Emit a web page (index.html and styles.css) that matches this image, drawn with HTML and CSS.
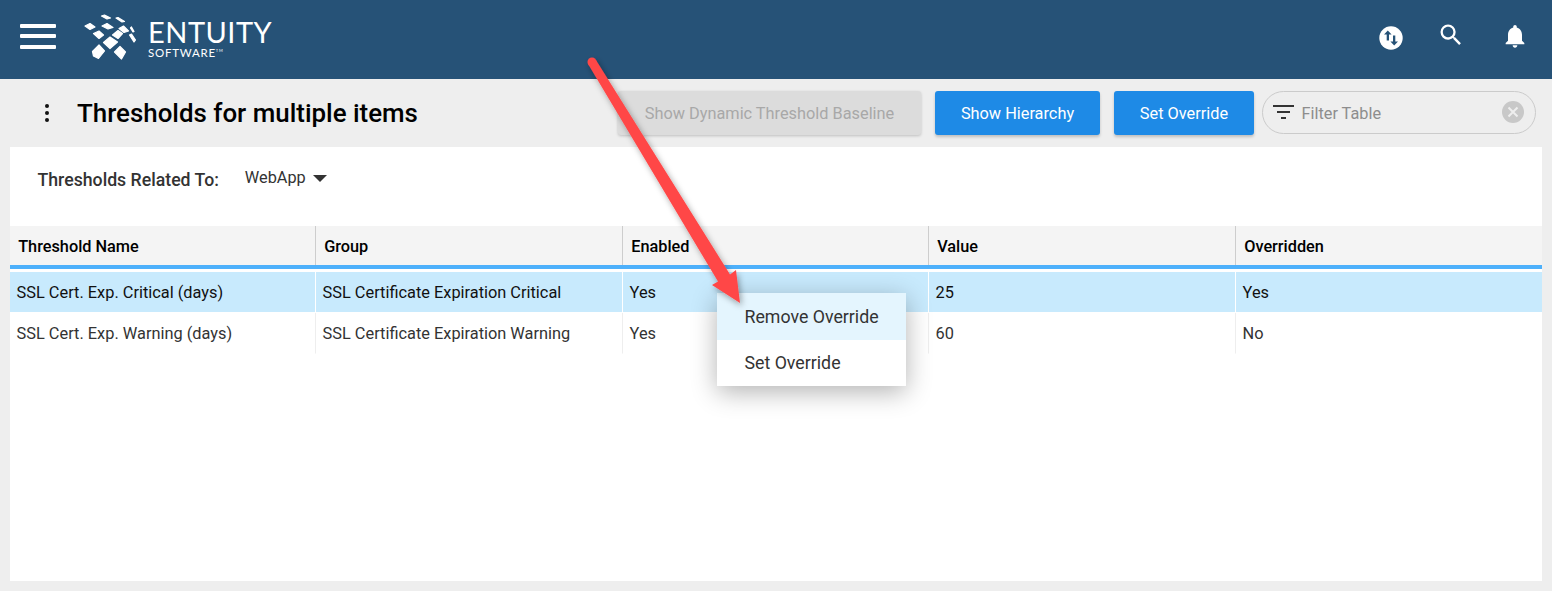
FILE: index.html
```html
<!DOCTYPE html>
<html lang="en">
<head>
<meta charset="utf-8">
<title>Thresholds for multiple items</title>
<link rel="stylesheet" href="styles.css">
</head>
<body>
<header class="topbar">
  <div class="burger"><span></span><span></span><span></span></div>
  <svg class="logo-mark" viewBox="0 0 54 48" width="54" height="48" fill="#fff" stroke="#fff" stroke-width="1.200" stroke-linejoin="round">
    <polygon points="18.500,3 21.500,2 27.500,5 24,6"/>
    <polygon points="33,5 35,4.500 41.500,8.500 39,9"/>
    <polygon points="2,13 7,10.500 12,14 7,16.500"/>
    <polygon points="19,13 24,10.500 30,14.500 25,16"/>
    <polygon points="36,15.500 40.500,13 45.500,18 41,19.500"/>
    <polygon points="47.500,15 48.500,14 51,18.500 50,19"/>
    <polygon points="10.500,20.500 16,18 20.500,22 16,25.500"/>
    <polygon points="29.500,22 35,17.500 39.500,20.500 35,25.500"/>
    <polygon points="46.500,22 48.500,21 52.500,27 51,29"/>
    <polygon points="20.500,29.500 27,24 34.500,29 27,35.500"/>
    <polygon points="9.500,38.500 16,32 21.500,38 15.500,45.500 10.500,43"/>
    <polygon points="31.500,39 37,33.500 42.500,39 38.500,46"/>
  </svg>
  <div class="brand">
    <div class="brand-name">ENTUITY</div>
    <div class="brand-sub">SOFTWARE<sup>TM</sup></div>
  </div>
  <div class="top-icons">
    <svg class="ti-swap" viewBox="0 0 24 24" width="24" height="24">
      <circle cx="12" cy="12" r="11.700" fill="#fff"/>
      <path fill="#265277" d="M8.800 4.500l-3.800 4h2.700v6h2.300v-6h2.600zM15.200 19.500l3.800-4h-2.700v-6H14v6h-2.600z"/>
    </svg>
    <svg class="ti-search" viewBox="0 0 24 24" width="28" height="28">
      <path fill="#fff" d="M15.500 14h-.79l-.28-.27A6.470 6.470 0 0 0 16 9.500 6.500 6.500 0 1 0 9.500 16c1.610 0 3.090-.59 4.230-1.570l.27.28v.79l5 4.990L20.490 19l-4.990-5zm-6 0C7.010 14 5 11.990 5 9.500S7.010 5 9.500 5 14 7.010 14 9.500 11.990 14 9.500 14z"/>
    </svg>
    <svg class="ti-bell" viewBox="0 0 24 24" width="28" height="28">
      <path fill="#fff" d="M12 22c1.100 0 2-.9 2-2h-4c0 1.100.9 2 2 2zm6-6v-5c0-3.070-1.630-5.640-4.500-6.320V4c0-.83-.67-1.500-1.500-1.500s-1.500.67-1.500 1.500v.68C7.640 5.360 6 7.920 6 11v5l-2 2v1h16v-1l-2-2z"/>
    </svg>
  </div>
</header>

<section class="toolbar">
  <div class="kebab"><i></i><i></i><i></i></div>
  <h1 class="title">Thresholds for multiple items</h1>
  <div class="actions">
    <button class="btn btn-disabled">Show Dynamic Threshold Baseline</button>
    <button class="btn btn-primary btn-hier">Show Hierarchy</button>
    <button class="btn btn-primary btn-set">Set Override</button>
    <div class="filter">
      <svg class="filter-icon" viewBox="0 0 21 14" width="21" height="14"><path fill="#333" d="M0 0h21v2H0zM4 6h13v2H4zM8 12h5v2H8z"/></svg>
      <span class="filter-text">Filter Table</span>
      <span class="filter-clear"><svg viewBox="0 0 22 22" width="22" height="22"><circle cx="11" cy="11" r="11" fill="#c8c8c8"/><path d="M6.500 6.500l9 9M15.500 6.500l-9 9" stroke="#eee" stroke-width="2"/></svg></span>
    </div>
  </div>
</section>

<main class="panel">
  <div class="related">
    <span class="related-label">Thresholds Related To:</span>
    <span class="related-value">WebApp</span>
    <span class="caret"></span>
  </div>
  <div class="grid-table">
    <div class="tr th">
      <div class="cell">Threshold Name</div>
      <div class="cell">Group</div>
      <div class="cell">Enabled</div>
      <div class="cell">Value</div>
      <div class="cell">Overridden</div>
    </div>
    <div class="tr td selected">
      <div class="cell">SSL Cert. Exp. Critical (days)</div>
      <div class="cell">SSL Certificate Expiration Critical</div>
      <div class="cell">Yes</div>
      <div class="cell">25</div>
      <div class="cell">Yes</div>
    </div>
    <div class="tr td">
      <div class="cell">SSL Cert. Exp. Warning (days)</div>
      <div class="cell">SSL Certificate Expiration Warning</div>
      <div class="cell">Yes</div>
      <div class="cell">60</div>
      <div class="cell">No</div>
    </div>
  </div>
</main>

<div class="menu">
  <div class="menu-item active">Remove Override</div>
  <div class="menu-item">Set Override</div>
</div>

<svg class="arrow" viewBox="0 0 1552 591" width="1552" height="591">
  <defs>
    <filter id="ash" x="-20%" y="-20%" width="140%" height="140%">
      <feDropShadow dx="2" dy="3" stdDeviation="3" flood-color="#000" flood-opacity=".35"/>
    </filter>
  </defs>
  <g filter="url(#ash)" fill="#ff4747">
    <circle cx="592" cy="62" r="4.500"/>
    <polygon points="595.800,59.700 730,274.400 736,270 740,303 712,285 718,281.600 588.200,64.300"/>
  </g>
</svg>
</body>
</html>
```
FILE: styles.css
```css
* { box-sizing: border-box; }
html, body { margin: 0; height: 591px; overflow: hidden; }
body { background: #eeeeee; font-family: Roboto, "Liberation Sans", sans-serif; color: #333; position: relative; }

.topbar { height: 79px; background: #265277; display: flex; align-items: center; padding-left: 20px; position: relative; }
.burger { width: 36px; display: flex; flex-direction: column; gap: 6.500px; margin-top: -7px; }
.burger span { display: block; height: 4px; background: #fff; border-radius: 1px; }
.logo-mark { margin-left: 27px; margin-top: -5px; flex: none; }
.brand { margin-left: 11px; color: #fff; font-family: Lato, sans-serif; margin-top: -4px; }
.brand-name { font-size: 29px; line-height: 30px; letter-spacing: .5px; font-weight: 400; }
.brand-sub { font-size: 11.500px; line-height: 12px; letter-spacing: .75px; margin-top: 0; }
.brand-sub sup { font-size: 4px; vertical-align: 5px; line-height: 0; }
.top-icons { margin-left: auto; display: flex; align-items: center; padding-right: 23px; }
.ti-swap { margin-top: -4px; margin-right: 34px; }
.ti-search { margin-top: -9px; margin-right: 36px; }
.ti-bell { margin-top: -8px; }

.toolbar { height: 68px; display: flex; align-items: center; padding-left: 44px; }
.kebab { width: 6px; display: flex; flex-direction: column; gap: 2.500px; align-items: center; }
.kebab i { display: block; width: 4.500px; height: 4.500px; border-radius: 50%; background: #111; }
.title { margin: 0 0 0 27px; font-size: 25.900px; font-weight: 500; color: #000; line-height: 30px; white-space: nowrap; }
.actions { margin-left: auto; display: flex; align-items: center; padding-right: 16px; }
.btn { height: 44px; border: 0; border-radius: 3px; font: 400 16.320px Roboto, sans-serif; padding: 0; box-shadow: 0 2px 3px rgba(0,0,0,.2); }
.btn-disabled { width: 303px; background: #dcdcdc; color: #a8a8a8; box-shadow: 0 1px 3px rgba(0,0,0,.2); margin-right: 14px; }
.btn-primary { background: #1e8ae6; color: #fff; }
.btn-hier { width: 165px; margin-right: 14px; }
.btn-set { width: 140px; margin-right: 8px; }
.filter { width: 274px; height: 43px; margin-top: -2px; border: 1px solid #cbcbcb; border-radius: 22px; display: flex; align-items: center; padding: 0 11px 0 10px; }
.filter-icon { flex: none; }
.filter-text { margin: 2px 0 0 7.500px; font-size: 16.300px; color: #8d8d8d; }
.filter-clear { margin-left: auto; display: flex; }

.panel { margin: 0 10px; height: 434px; background: #fff; }
.related { height: 79px; display: flex; align-items: flex-start; padding-top: 21px; }
.related-label { margin-left: 27.500px; font-size: 17.700px; font-weight: 500; color: #333; line-height: 24px; }
.related-value { margin-left: 26px; font-size: 16.300px; color: #333; line-height: 19px; }
.caret { margin: 7px 0 0 7px; width: 0; height: 0; border-left: 7px solid transparent; border-right: 7px solid transparent; border-top: 7px solid #333; }

.tr { display: grid; grid-template-columns: 306px 307px 306px 307px 306px; }
.th { height: 43px; background: #f4f4f4; border-bottom: 4px solid #4db0fb; font-weight: 500; color: #000; font-size: 16.300px; margin-bottom: 3px; }
.th .cell { padding: 11px 0 0 8.200px; line-height: 19px; border-right: 1px solid #cdcdcd; }
.th .cell:last-child { border-right: 0; }
.td { height: 41px; font-size: 16.350px; color: #333; }
.td .cell { padding: 11px 0 0 6.600px; line-height: 20px; height: 41px; border-right: 1px solid #eeeeee; border-bottom: 1px solid transparent; white-space: nowrap; }
.td .cell:last-child { border-right: 0; }
.selected { background: #c8eafd; color: #111; }
.selected .cell { border-right-color: #fff; border-bottom-color: #fff; }

.menu { position: absolute; left: 717px; top: 293px; width: 189px; background: #fff; box-shadow: 0 6px 24px rgba(0,0,0,.3); }
.menu-item { height: 46.500px; padding: 14px 0 0 27.500px; font-size: 17.750px; line-height: 21px; color: #333; }
.menu-item + .menu-item { padding-top: 13px; }
.menu-item.active { background: #e4f5fe; }

.arrow { position: absolute; left: 0; top: 0; pointer-events: none; }
```
